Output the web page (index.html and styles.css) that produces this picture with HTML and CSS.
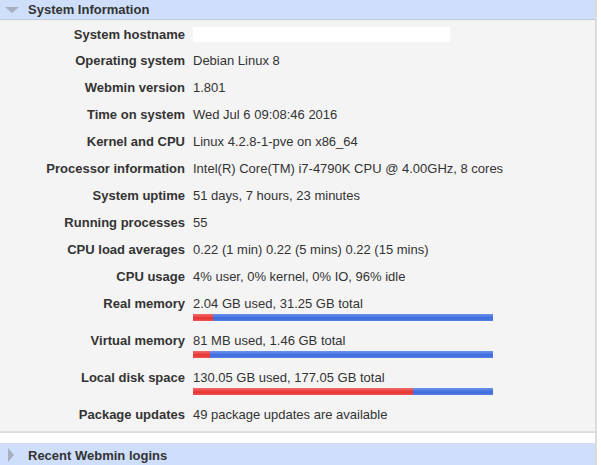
FILE: index.html
```html
<!DOCTYPE html>
<html lang="en">
<head>
    <meta charset="UTF-8">
    <title>System Information</title>
    <link rel="stylesheet" href="styles.css">
</head>
<body>

<div class="frame">
    <div class="section-head">
        <span class="arrow-down"></span>
        <span class="head-title">System Information</span>
    </div>

    <div class="panel">
        <table class="info">
            <tr class="first-row">
                <td class="label">System hostname</td>
                <td class="value"><span class="hostname"></span></td>
            </tr>
            <tr>
                <td class="label">Operating system</td>
                <td class="value">Debian Linux 8</td>
            </tr>
            <tr>
                <td class="label">Webmin version</td>
                <td class="value">1.801</td>
            </tr>
            <tr>
                <td class="label">Time on system</td>
                <td class="value">Wed Jul 6 09:08:46 2016</td>
            </tr>
            <tr>
                <td class="label">Kernel and CPU</td>
                <td class="value">Linux 4.2.8-1-pve on x86_64</td>
            </tr>
            <tr>
                <td class="label">Processor information</td>
                <td class="value">Intel(R) Core(TM) i7-4790K CPU @ 4.00GHz, 8 cores</td>
            </tr>
            <tr>
                <td class="label">System uptime</td>
                <td class="value">51 days, 7 hours, 23 minutes</td>
            </tr>
            <tr>
                <td class="label">Running processes</td>
                <td class="value">55</td>
            </tr>
            <tr>
                <td class="label">CPU load averages</td>
                <td class="value">0.22 (1 min) 0.22 (5 mins) 0.22 (15 mins)</td>
            </tr>
            <tr>
                <td class="label">CPU usage</td>
                <td class="value">4% user, 0% kernel, 0% IO, 96% idle</td>
            </tr>
            <tr>
                <td class="label">Real memory</td>
                <td class="value">
                    2.04 GB used, 31.25 GB total
                    <div class="bar"><div class="used" style="width: 20px"></div></div>
                </td>
            </tr>
            <tr>
                <td class="label">Virtual memory</td>
                <td class="value">
                    81 MB used, 1.46 GB total
                    <div class="bar"><div class="used" style="width: 17px"></div></div>
                </td>
            </tr>
            <tr>
                <td class="label">Local disk space</td>
                <td class="value">
                    130.05 GB used, 177.05 GB total
                    <div class="bar"><div class="used" style="width: 220px"></div></div>
                </td>
            </tr>
            <tr>
                <td class="label">Package updates</td>
                <td class="value">49 package updates are available</td>
            </tr>
        </table>
    </div>

    <div class="section-head closed">
        <span class="arrow-right"></span>
        <span class="head-title">Recent Webmin logins</span>
    </div>
</div>

</body>
</html>
```

FILE: styles.css
```css
body {
    margin: 0;
    padding: 0;
    background: #ffffff;
    font-family: Arial, "Liberation Sans", sans-serif;
    font-size: 13px;
    color: #333333;
}
.frame {
    width: 595px;
    border-right: 2px solid #dcdcdc;
    min-height: 465px;
}
.section-head {
    display: flex;
    align-items: center;
    height: 19px;
    background: #cfdffb;
    border-bottom: 1px solid #bccde9;
}
.section-head.closed {
    margin-top: 10px;
    height: 22px;
    border-top: 1px solid #d6dde8;
    border-bottom: none;
}
.head-title {
    font-weight: bold;
    color: #333333;
    margin-left: 9px;
}
.section-head.closed .head-title {
    margin-left: 14px;
}
.arrow-down {
    margin-left: 5px;
    width: 0;
    height: 0;
    border-left: 7px solid transparent;
    border-right: 7px solid transparent;
    border-top: 6px solid #a5afc0;
}
.arrow-right {
    margin-left: 8px;
    width: 0;
    height: 0;
    border-top: 7px solid transparent;
    border-bottom: 7px solid transparent;
    border-left: 6px solid #a5afc0;
}
.panel {
    background: #f4f4f4;
    border-top: 1px solid #f7efe3;
    border-bottom: 2px solid #dfdfdf;
    padding-bottom: 3px;
}
.info {
    border-collapse: collapse;
}
.info td {
    padding: 6px 0;
    line-height: 15px;
    vertical-align: top;
}
.info .first-row td {
    padding-bottom: 5px;
}
.label {
    width: 185px;
    text-align: right;
    font-weight: bold;
    white-space: nowrap;
}
.value {
    padding-left: 8px !important;
    white-space: nowrap;
}
.hostname {
    display: block;
    width: 257px;
    height: 15px;
    background: #ffffff;
}
.bar {
    width: 300px;
    height: 7px;
    margin-top: 3px;
    background: linear-gradient(#6a92ec, #3d6bdc 60%, #5680e6);
}
.used {
    height: 7px;
    background: linear-gradient(#f46a6a, #e63232 60%, #ef5555);
}
```
